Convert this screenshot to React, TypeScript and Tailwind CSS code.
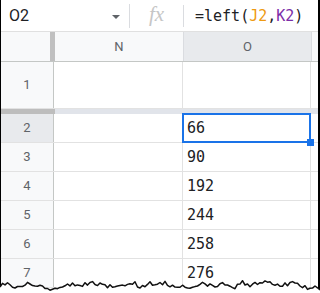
import React from "react";

const rows = [
  { n: 2, value: "66", selected: true },
  { n: 3, value: "90" },
  { n: 4, value: "192" },
  { n: 5, value: "244" },
  { n: 6, value: "258" },
  { n: 7, value: "276" },
];

// jagged "torn paper" edge along the bottom
const tornPoints = () => {
  let seed = 11;
  const rand = () => {
    seed = (seed * 9301 + 49297) % 233280;
    return seed / 233280;
  };
  const pts: string[] = [];
  let drift = 0;
  for (let x = 0; x <= 320; x += 2.5) {
    drift = drift * 0.7 + (rand() - 0.5) * 4;
    const y = 285 + drift + (rand() - 0.5) * 3.5 + Math.sin(x / 23) * 1.5;
    pts.push(`${x.toFixed(1)},${y.toFixed(1)}`);
  }
  return pts;
};

const TornEdge = () => {
  const pts = tornPoints();
  const fill = `M0,293 L${pts.join(" L")} L320,293 Z`;
  return (
    <svg
      className="absolute left-0 top-0 pointer-events-none z-20"
      width="320"
      height="293"
      viewBox="0 0 320 293">
      <path d={fill} fill="white" />
      <polyline points={pts.join(" ")} fill="none" stroke="#111" strokeWidth="1.5" strokeLinejoin="round" />
    </svg>
  );
};

const App = () => {
  return (
    <div className="relative w-[320px] h-[293px] overflow-hidden bg-white font-['Roboto',sans-serif]">
      <div className="border-l border-r-2 border-black h-full">
        {/* formula bar */}
        <div className="flex items-center h-[32px] border-b border-[#e0e0e0]">
          <div className="relative w-[128px] h-full flex items-center pl-[8px] text-[16px] text-[#202124]">
            O2
            <div className="absolute left-[111px] top-[15px] w-0 h-0 border-l-[4px] border-r-[4px] border-t-[4px] border-l-transparent border-r-transparent border-t-[#5f6368]" />
          </div>
          <div className="w-px h-[24px] bg-[#dadce0]" />
          <div className="w-[53px] text-center italic text-[21px] text-[#c6c6c6] font-['Liberation_Serif',serif] leading-none pb-[2px]">
            fx
          </div>
          <div className="w-px h-[22px] bg-[#dadce0]" />
          <div className="pl-[11px] text-[15px] text-[#202124] font-['DejaVu_Sans_Mono',monospace] pt-[1px]">
            =left(<span className="text-[#ee9a12]">J2</span>,
            <span className="text-[#7b2ea8]">K2</span>)
          </div>
        </div>

        {/* column headers */}
        <div className="flex h-[30px] border-b border-[#c4c7c5] text-[13px] text-[#5f6368]">
          <div className="w-[49px] bg-[#f8f9fa]" />
          <div className="w-[5px] bg-[#c0c0c0]" />
          <div className="w-[129px] bg-[#f8f9fa] border-r border-[#dadce0] flex items-center justify-center">
            N
          </div>
          <div className="w-[128px] bg-[#e8eaed] border-r border-[#dadce0] flex items-center justify-center">
            O
          </div>
          <div className="flex-1 bg-[#f8f9fa]" />
        </div>

        {/* row 1 (frozen) */}
        <div className="flex h-[47px] border-b border-[#e2e2e2]">
          <div className="w-[53px] bg-[#f8f9fa] border-r border-[#c4c7c5] flex items-center justify-center text-[13px] text-[#5f6368]">
            1
          </div>
          <div className="w-[129px] border-r border-[#e2e2e2]" />
          <div className="w-[128px] border-r border-[#e2e2e2]" />
          <div className="flex-1" />
        </div>

        {/* freeze divider */}
        <div className="flex h-[5px]">
          <div className="w-[54px] bg-[#bdbdbd]" />
          <div className="flex-1 bg-[#e1e4ea]" />
        </div>

        {rows.map(({ n, value, selected }) => (
          <div key={n} className="flex h-[29px] border-b border-[#e2e2e2]">
            <div
              className={`w-[53px] border-r border-[#c4c7c5] flex items-center justify-center text-[13px] text-[#5f6368] ${
                selected ? "bg-[#e8eaed]" : "bg-[#f8f9fa]"
              }`}>
              {n}
            </div>
            <div className="w-[129px] border-r border-[#e2e2e2]" />
            <div className="relative w-[128px] border-r border-[#e2e2e2] flex items-end pl-[4px] pb-[6px] text-[15px] leading-none text-[#202124] font-['DejaVu_Sans_Mono',monospace]">
              {value}
              {selected && (
                <>
                  <div className="absolute z-10 -left-px -top-px -right-px -bottom-px border-2 border-[#1a73e8]" />
                  <div className="absolute z-10 -right-[4px] -bottom-[4px] w-[7px] h-[7px] bg-[#1a73e8]" />
                </>
              )}
            </div>
            <div className="flex-1" />
          </div>
        ))}
      </div>
      <TornEdge />
    </div>
  );
};

export default App;
